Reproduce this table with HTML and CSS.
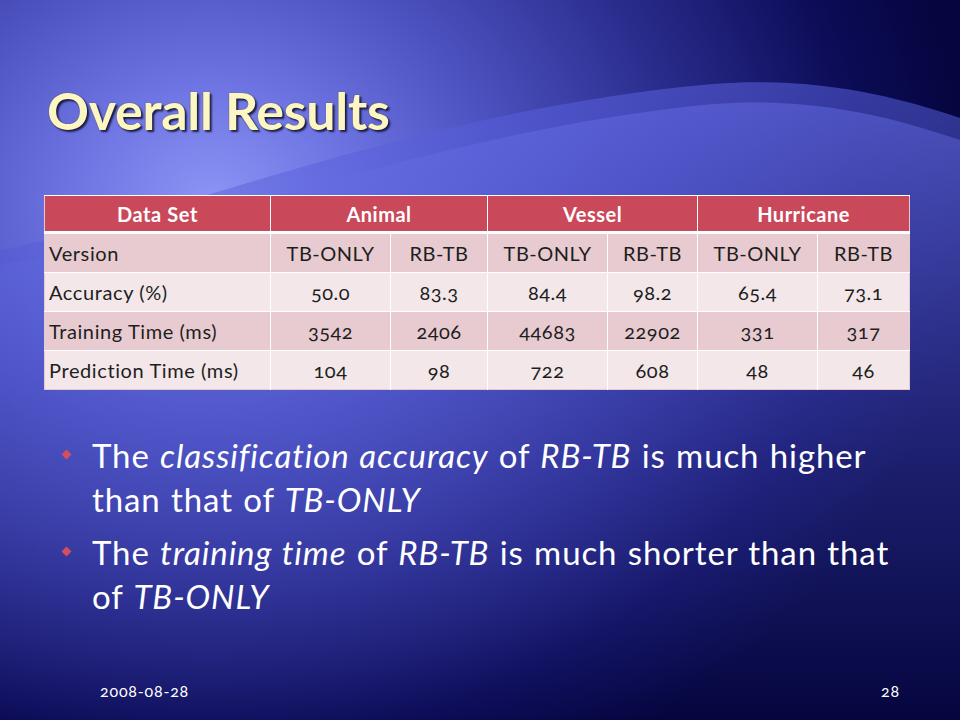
FILE: index.html
```html
<!DOCTYPE html>
<html>
<head>
<meta charset="utf-8">
<link rel="stylesheet" href="styles.css">
</head>
<body>
<div class="slide">
  <svg class="wave" width="960" height="720" viewBox="0 0 960 720">
    <defs>
      <linearGradient id="fadeA" x1="0" y1="0" x2="0" y2="1">
        <stop offset="0" stop-color="#5a62e0" stop-opacity="0.55"/>
        <stop offset="0.5" stop-color="#4a50c8" stop-opacity="0.25"/>
        <stop offset="1" stop-color="#4a50c8" stop-opacity="0"/>
      </linearGradient>
      <linearGradient id="fadeB" x1="0" y1="0" x2="0" y2="1">
        <stop offset="0" stop-color="#6a72ea" stop-opacity="0.45"/>
        <stop offset="0.6" stop-color="#5058d0" stop-opacity="0.15"/>
        <stop offset="1" stop-color="#5058d0" stop-opacity="0"/>
      </linearGradient>
    </defs>
    <path d="M0 250 C 180 215, 420 110, 713 84 C 820 76, 900 98, 960 118 L 960 720 L 0 720 Z" fill="url(#fadeA)"/>
    <path d="M0 265 C 200 230, 440 130, 713 104 C 820 96, 900 120, 960 140 L 960 720 L 0 720 Z" fill="url(#fadeB)"/>
  </svg>
  <div class="content">
    <h1 class="title">Overall Results</h1>
    <table class="results">
      <colgroup>
        <col class="w-first">
        <col class="w-tb"><col class="w-rb1">
        <col class="w-tb"><col class="w-rb2">
        <col class="w-tb"><col class="w-rb3">
      </colgroup>
      <tr class="head">
        <th class="first">Data Set</th>
        <th colspan="2">Animal</th>
        <th colspan="2">Vessel</th>
        <th colspan="2">Hurricane</th>
      </tr>
      <tr class="dark">
        <td class="first">Version</td>
        <td>TB-ONLY</td><td>RB-TB</td>
        <td>TB-ONLY</td><td>RB-TB</td>
        <td>TB-ONLY</td><td>RB-TB</td>
      </tr>
      <tr class="light">
        <td class="first">Accuracy (%)</td>
        <td>50.0</td><td>83.3</td><td>84.4</td><td>98.2</td><td>65.4</td><td>73.1</td>
      </tr>
      <tr class="dark">
        <td class="first">Training Time (ms)</td>
        <td>3542</td><td>2406</td><td>44683</td><td>22902</td><td>331</td><td>317</td>
      </tr>
      <tr class="light">
        <td class="first">Prediction Time (ms)</td>
        <td>104</td><td>98</td><td>722</td><td>608</td><td>48</td><td>46</td>
      </tr>
    </table>
    <ul class="bullets">
      <li>The <em>classification accuracy</em> of <em>RB-TB</em> is much higher than that of <em>TB-ONLY</em></li>
      <li>The <em>training time</em> of <em>RB-TB</em> is much shorter than that of <em>TB-ONLY</em></li>
    </ul>
    <div class="footer">
      <span class="date">2008-08-28</span>
      <span class="num">28</span>
    </div>
  </div>
</div>
</body>
</html>
```
FILE: styles.css
```css
html, body {
  margin: 0;
  padding: 0;
}
body {
  width: 960px;
  height: 720px;
  overflow: hidden;
  font-family: Lato, "Open Sans", sans-serif;
  font-variant-numeric: oldstyle-nums;
}
.slide {
  position: relative;
  width: 960px;
  height: 720px;
  overflow: hidden;
  background:
    radial-gradient(ellipse 760px 640px at 210px 200px,
      #8c94f4 0%, #6e74e2 18%, #4c52c0 38%, #2a2c8c 62%, #0c0c58 85%, #05053f 100%);
}
.wave {
  position: absolute;
  left: 0;
  top: 0;
}
.content {
  position: relative;
  display: flex;
  flex-direction: column;
  height: 720px;
  box-sizing: border-box;
  padding: 78px 51px 0 44px;
}
.title {
  margin: 0 0 0 3px;
  font-size: 52px;
  line-height: 64px;
  font-weight: 700;
  color: #fcf7c2;
  text-shadow: 2px 2px 2px rgba(0, 0, 20, 0.75), 0 0 1px rgba(60, 50, 0, 0.8);
  letter-spacing: -0.3px;
}
.results {
  margin-top: 53px;
  width: 865px;
  table-layout: fixed;
  border-collapse: collapse;
  font-size: 20px;
  letter-spacing: 0.5px;
  color: #1e1e1e;
  border: 1px solid #e8c8d0;
}
.w-first { width: 226px; }
.w-tb { width: 120px; }
.w-rb1 { width: 97px; }
.w-rb2 { width: 90px; }
.w-rb3 { width: 92px; }
.results th,
.results td {
  height: 38px;
  padding: 0;
  text-align: center;
  white-space: nowrap;
  border-left: 1px solid #ffffff;
  border-top: 1px solid #ffffff;
}
.results th {
  height: 35px;
  background: #c9485a;
  color: #ffffff;
  font-weight: 700;
  border-bottom: 3px solid #ffffff;
}
.results .first {
  text-align: left;
  padding-left: 4px;
  border-left: none;
  letter-spacing: 0.6px;
}
.results th.first {
  text-align: center;
  padding-left: 0;
}
.results tr.dark td { background: #e8cbd1; }
.results tr.light td { background: #f3e7e9; }
.bullets {
  list-style: none;
  margin: 43px 0 0 0;
  padding: 0 0 0 48px;
  color: #ffffff;
  font-size: 33px;
  letter-spacing: 0.9px;
  word-spacing: 1px;
  line-height: 44px;
}
.bullets li {
  position: relative;
  margin-bottom: 9px;
}
.bullets li::before {
  content: "";
  position: absolute;
  left: -29px;
  top: 18px;
  width: 7px;
  height: 7px;
  background: #d44f5e;
  transform: rotate(45deg);
}
.bullets em {
  font-style: italic;
  white-space: nowrap;
}
.footer {
  margin-top: auto;
  display: flex;
  justify-content: space-between;
  padding: 0 9px 20px 56px;
  color: #ffffff;
  font-size: 16px;
  letter-spacing: 0.8px;
}
```
